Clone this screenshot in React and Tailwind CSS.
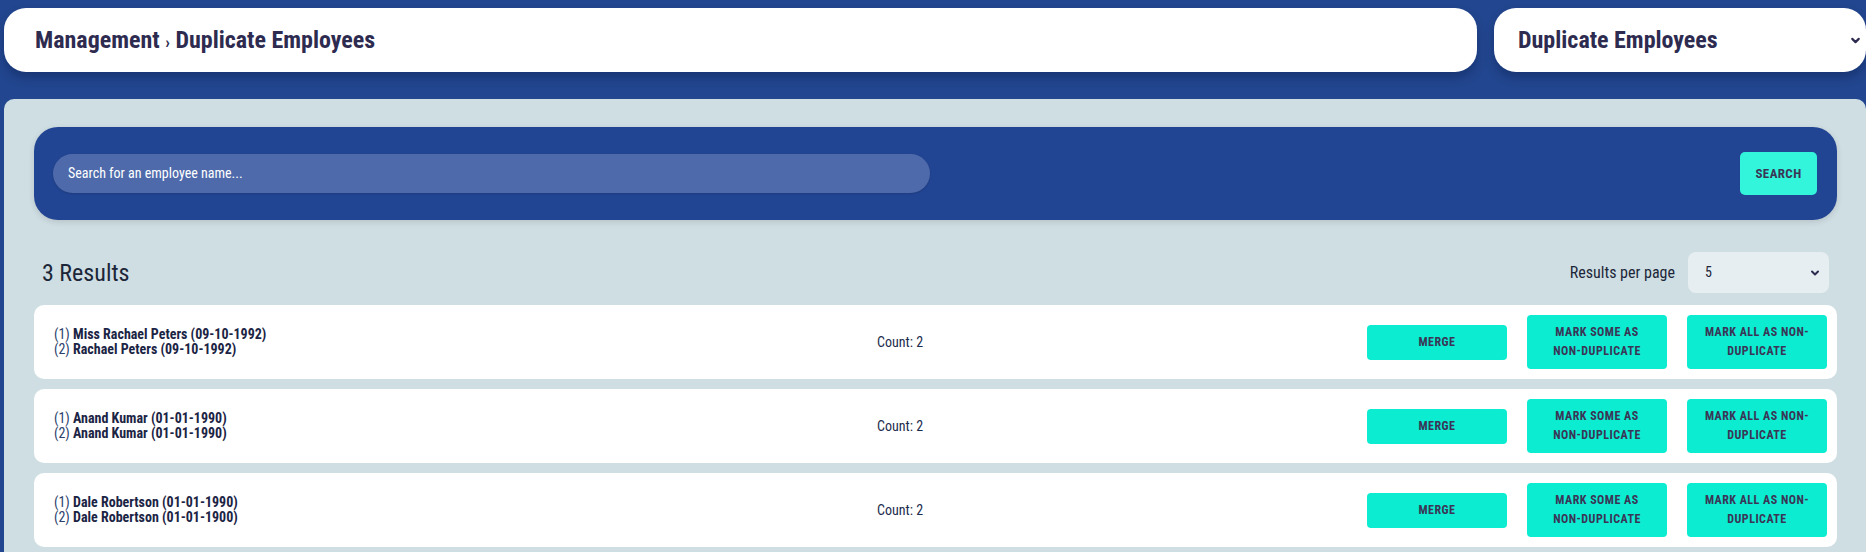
const font = "font-['Roboto_Condensed','Liberation_Sans_Narrow','DejaVu_Sans_Condensed',Roboto,sans-serif]"

const groups = [
  { names: ['Miss Rachael Peters (09-10-1992)', 'Rachael Peters (09-10-1992)'], count: 2 },
  { names: ['Anand Kumar (01-01-1990)', 'Anand Kumar (01-01-1990)'], count: 2 },
  { names: ['Dale Robertson (01-01-1990)', 'Dale Robertson (01-01-1900)'], count: 2 },
]

function Chevron({ className }) {
  return (
    <svg viewBox="0 0 12 12" className={className} fill="none" stroke="currentColor" strokeWidth="2" strokeLinecap="round" strokeLinejoin="round">
      <path d="M3 4.5 6 7.5 9 4.5" />
    </svg>
  )
}

function ActionButton({ children, tall }) {
  return (
    <button
      className={`flex w-[140px] items-center justify-center rounded-[4px] bg-[#0cecd0] px-3 text-center text-[12px] font-bold uppercase leading-[19px] tracking-[0.04em] text-[#3a3556] ${
        tall ? 'h-[54px]' : 'h-[35px]'
      }`}
    >
      {children}
    </button>
  )
}

function GroupRow({ group }) {
  return (
    <div className="flex h-[74px] items-center rounded-[10px] bg-white pl-[20px] pr-[10px]">
      <div className="w-[823px] text-[14px] leading-[15px] text-[#1b2444]">
        {group.names.map((name, idx) => (
          <p key={`${name}-${idx}`}>
            <span className="font-normal text-[#2b3f6b]">({idx + 1})</span> <span className="font-bold">{name}</span>
          </p>
        ))}
      </div>
      <p className="flex-1 text-[14px] text-[#1b2c4d]">Count: {group.count}</p>
      <div className="flex items-center gap-5">
        <ActionButton>Merge</ActionButton>
        <ActionButton tall>
          Mark some as
          <br />
          non-duplicate
        </ActionButton>
        <ActionButton tall>
          Mark all as non-
          <br />
          duplicate
        </ActionButton>
      </div>
    </div>
  )
}

export default function App() {
  return (
    <div className={`h-[552px] w-[1866px] overflow-hidden bg-[#22468f] pl-[4px] pt-[8px] ${font}`}>
      <div className="flex gap-[17px]">
        <div className="flex h-[64px] w-[1473px] items-center rounded-[22px] bg-white pl-[31px] shadow-[0_6px_10px_rgba(10,25,70,0.35)]">
          <h1 className="text-[24px] font-bold text-[#2e2b50]">
            Management <span className="text-[17px]">›</span> Duplicate Employees
          </h1>
        </div>
        <div className="flex h-[64px] flex-1 items-center justify-between rounded-[22px] bg-white pl-[24px] pr-[4px] shadow-[0_6px_10px_rgba(10,25,70,0.35)]">
          <span className="text-[24px] font-bold text-[#2e2b50]">Duplicate Employees</span>
          <Chevron className="h-[13px] w-[13px] text-[#2e2b50]" />
        </div>
      </div>

      <div className="mt-[27px] h-[460px] rounded-tl-[10px] rounded-tr-[10px] bg-[#cfdee3] pl-[30px] pr-[29px] pt-[28px]">
        <div className="flex h-[93px] items-center justify-between rounded-[24px] bg-[#224593] pl-[19px] pr-[20px] shadow-[0_2px_6px_rgba(0,0,0,0.12)]">
          <div className="flex h-[39px] w-[877px] items-center rounded-full bg-[#4e6aab] px-[15px] text-[14px] text-white shadow-[0_1px_2px_rgba(0,0,0,0.15)]">
            Search for an employee name...
          </div>
          <button className="flex h-[43px] w-[77px] items-center justify-center rounded-[5px] bg-[#33f5db] text-[13px] font-bold tracking-[0.03em] text-[#3a3556]">
            SEARCH
          </button>
        </div>

        <div className="mb-[12px] mt-[32px] flex h-[41px] items-center justify-between pl-[8px] pr-[8px]">
          <h2 className="text-[24px] font-normal text-[#1c2638]">3 Results</h2>
          <div className="flex items-center gap-[13px]">
            <span className="text-[16px] text-[#1c2638]">Results per page</span>
            <div className="flex h-[41px] w-[141px] items-center justify-between rounded-[8px] bg-[#e6eef1] pl-[17px] pr-[8px] text-[14px] text-[#1c2638]">
              <span>5</span>
              <Chevron className="h-[12px] w-[12px] text-[#2e2b50]" />
            </div>
          </div>
        </div>

        <div className="flex flex-col gap-[10px]">
          {groups.map((group, idx) => (
            <GroupRow key={idx} group={group} />
          ))}
        </div>
      </div>
    </div>
  )
}
